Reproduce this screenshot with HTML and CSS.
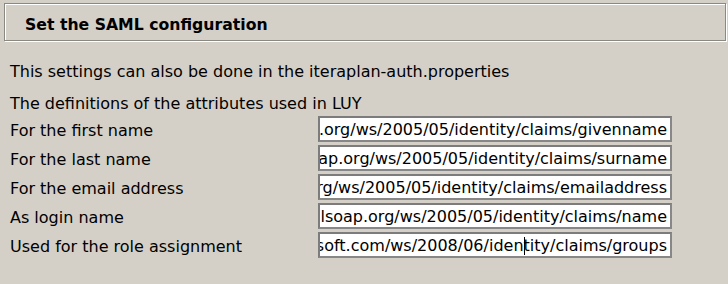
FILE: index.html
```html
<!DOCTYPE html>
<html>
<head>
<meta charset="utf-8">
<link rel="stylesheet" href="styles.css">
</head>
<body>
<div class="header"><h1 class="title">Set the SAML configuration</h1></div>
<div class="content">
  <p class="note">This settings can also be done in the iteraplan-auth.properties</p>
  <p class="note second">The definitions of the attributes used in LUY</p>
  <div class="form">
    <label class="label">For the first name</label>
    <div class="field"><span class="value">http://schemas.xmlsoap.org/ws/2005/05/identity/claims/givenname</span></div>
    <label class="label">For the last name</label>
    <div class="field"><span class="value">http://schemas.xmlsoap.org/ws/2005/05/identity/claims/surname</span></div>
    <label class="label">For the email address</label>
    <div class="field"><span class="value">http://schemas.xmlsoap.org/ws/2005/05/identity/claims/emailaddress</span></div>
    <label class="label">As login name</label>
    <div class="field"><span class="value">http://schemas.xmlsoap.org/ws/2005/05/identity/claims/name</span></div>
    <label class="label">Used for the role assignment</label>
    <div class="field"><span class="value">http://schemas.microsoft.com/ws/2008/06/iden<span class="caret"></span>tity/claims/groups</span></div>
  </div>
</div>
</body>
</html>
```
FILE: styles.css
```css
html, body {
  margin: 0;
  padding: 0;
  background: #d4d0c8;
}
body {
  font-family: "DejaVu Sans", Verdana, sans-serif;
  font-size: 16px;
  line-height: 19px;
  color: #000;
}
.header {
  margin: 3px 2px 0 4px;
  height: 38px;
  box-sizing: border-box;
  border: 1px solid #8a8882;
  box-shadow: inset 1px 1px 0 #fff, 1px 1px 0 #fff;
  padding: 11px 0 6px 20px;
}
.title {
  margin: 0;
  font-size: 15.7px;
  font-weight: bold;
  line-height: 19px;
}
.content {
  padding: 21px 0 0 10px;
}
.note {
  margin: 0;
}
.note.second {
  margin-top: 13px;
}
.form {
  margin-top: 3px;
  display: grid;
  grid-template-columns: 308px 354px;
  grid-auto-rows: 26px;
  row-gap: 3px;
  align-items: center;
}
.label {
  padding-top: 2px;
}
.field {
  height: 26px;
  box-sizing: border-box;
  border: 2px solid #878787;
  border-top-color: #7c7c7c;
  border-left-color: #7c7c7c;
  background: #fff;
  display: flex;
  justify-content: flex-end;
  align-items: center;
  overflow: hidden;
  white-space: nowrap;
  padding: 0 3px 0 1px;
}
.value {
  flex: none;
}
.caret {
  display: inline-block;
  width: 0;
  height: 18px;
  border-left: 1px solid #000;
  margin-right: -1px;
  vertical-align: -4px;
}
```
